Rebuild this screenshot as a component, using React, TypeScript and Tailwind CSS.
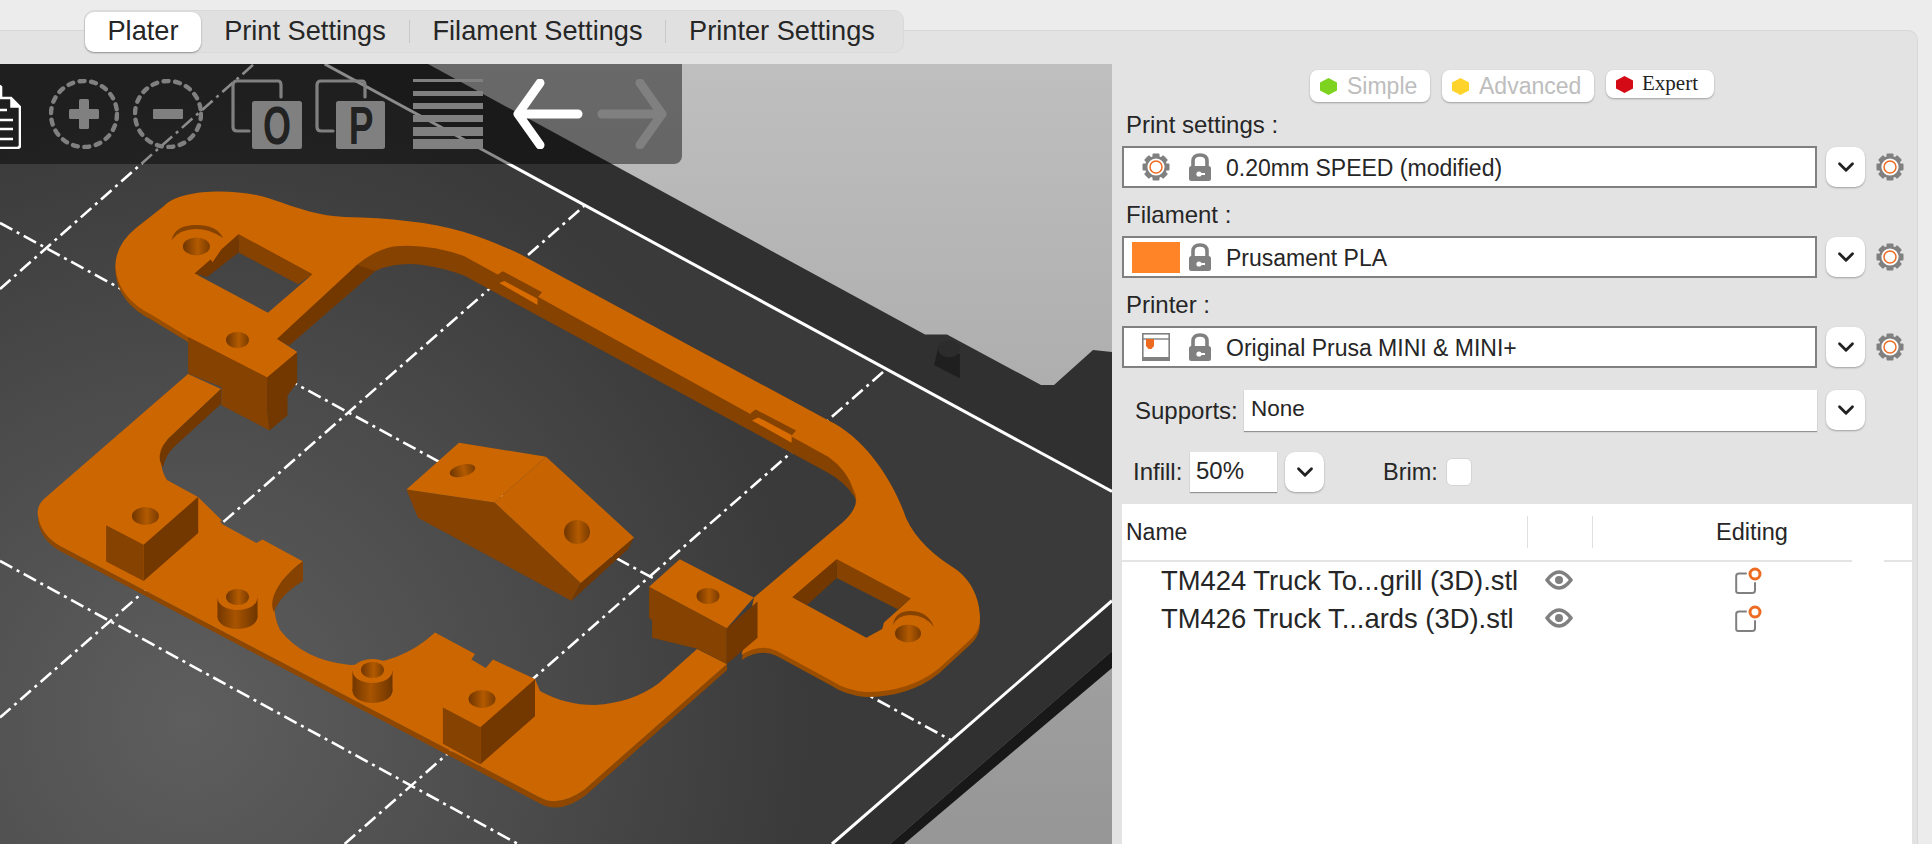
import React from 'react';
import { ChevronDown } from 'lucide-react';

// the crops used for tracing are stretched, so convert back to page pixels
const z4 = (pts: number[][]) => pts.map(([x, y]) => `${(x / 2.8).toFixed(1)},${(160 + y / 2.292).toFixed(1)}`).join(' ');
const z5 = (pts: number[][]) => pts.map(([x, y]) => `${(540 + x / 2.703).toFixed(1)},${(160 + y / 2.292).toFixed(1)}`).join(' ');

const TOP = '#cc6600';
const SIDE = '#854200';
const DARK = '#733700';

const upperFrame =
  'M188 337 L152 315 Q118 298 115.4 267 Q115 245 136 228 L164 206 C180 188 240 188 271 199 C300 209 320 216 345 217 C390 218 430 222 464 232 Q490 240 520 254 L828.6 420.5 C865 438 893 480 906 518 C916 540 935 556 954 568 C972 580 980 600 980 618 Q980 630 972 638 L939.5 668 Q910 692 865.6 692 Q845 690 832 681 L776.8 651 Q760 643 741.6 655 L754 597.6 L843 522 Q862 505 853.7 490 Q847 470 828.6 457 L464 256 Q428 243 393 246.4 Q375 250 357 264.7 L276.8 339 L297 352 L267 377 Z ' +
  'M194.6 273.4 L210.7 259.5 L212.5 262.5 L221.4 249.4 L238.6 234.2 L312.5 274.3 L267.9 312.7 Z ' +
  'M792.3 597.2 L836.7 559.2 L910.7 598.5 L884 622.5 L882.2 629 L866.3 637.7 Z';

const lowerFrame =
  'M188 374 L45 498 Q36 506 38 516 Q41 535 60 546 L539 797 Q558 808 584 790 L727 664 L697 649 L658.4 683.6 Q632 703 595 705 Q565 705 540 691 L535 679 L493 659.6 L485.7 668 L471.4 659.6 L475 654 L435 632.5 Q400 665 350 665 Q303 660 280 630 Q268 605 282 581 Q292 569 303 561.4 L262.5 539.6 L256.4 543 L222 524 L220 521 L222 520.5 L198 497 L167 480 Q155 462 168 439 L221 389 Z';

function Hole({ cx, cy, rx, ry, rotate = 0 }: { cx: number; cy: number; rx: number; ry: number; rotate?: number }) {
  return <ellipse cx={cx} cy={cy} rx={rx} ry={ry} fill="url(#hole)" transform={rotate ? `rotate(${rotate} ${cx} ${cy})` : undefined} />;
}

function Post({ cx, cy, h }: { cx: number; cy: number; h: number }) {
  return (
    <g>
      <ellipse cx={cx} cy={cy + h} rx={20} ry={12} fill="url(#post)" />
      <rect x={cx - 20} y={cy} width={40} height={h} fill="url(#post)" />
      <ellipse cx={cx} cy={cy} rx={20} ry={12} fill={TOP} />
      <Hole cx={cx} cy={cy - 1} rx={11.5} ry={8} />
    </g>
  );
}

function BedScene() {
  return (
    <svg viewBox="0 64 1112 780" className="block h-full w-full">
      <defs>
        <linearGradient id="sky" x1="0" y1="0" x2="0" y2="1">
          <stop offset="0" stopColor="#bfbfbf" />
          <stop offset="1" stopColor="#969696" />
        </linearGradient>
        <radialGradient id="bed" gradientUnits="userSpaceOnUse" cx="190" cy="720" r="620">
          <stop offset="0" stopColor="#5e5e5e" />
          <stop offset="0.55" stopColor="#4b4b4b" />
          <stop offset="1" stopColor="#3a3a3a" />
        </radialGradient>
        <linearGradient id="hole" x1="0" y1="0" x2="1" y2="0">
          <stop offset="0" stopColor="#6e3500" />
          <stop offset="0.55" stopColor="#b35a00" />
          <stop offset="1" stopColor="#7a3c00" />
        </linearGradient>
        <linearGradient id="post" x1="0" y1="0" x2="1" y2="0">
          <stop offset="0" stopColor="#733700" />
          <stop offset="0.45" stopColor="#a85400" />
          <stop offset="1" stopColor="#6e3500" />
        </linearGradient>
      </defs>

      <rect x="0" y="64" width="1112" height="780" fill="url(#sky)" />
      <polygon points="0,64 428,64 925,334.5 947,334.5 1041,385 1054,385 1093,350 1112,352 1112,651 890,844 0,844" fill="#303030" />
      <polygon points="1112,651 890,844 904,844 1112,668" fill="#181818" />
      <polygon points="0,64 324.6,64 1112,491.5 1112,600 832,844 0,844" fill="url(#bed)" />
      <line x1="324.6" y1="64" x2="1112" y2="491.5" stroke="#fff" strokeWidth="3" />
      <line x1="1112" y1="600.7" x2="832" y2="844" stroke="#fff" strokeWidth="3" />

      <g stroke="#fff" strokeWidth="2.6" strokeDasharray="14 5 3 5" fill="none">
        <line x1="0" y1="223" x2="950.7" y2="740" />
        <line x1="0" y1="561" x2="518" y2="844" />
        <line x1="0" y1="289" x2="254" y2="64" />
        <line x1="0" y1="717.6" x2="584" y2="206" />
        <line x1="344.6" y1="844" x2="886" y2="369.4" />
      </g>

      {/* little peg on the bed edge */}
      <polygon points={z5([[1065, 470], [1078, 425], [1135, 445], [1135, 500]])} fill="#1f1f1f" />
      <ellipse cx="949" cy="349" rx="11" ry="8.5" fill="#2c2c2c" />

      {/* lower frame */}
      <path
        d="M38 516 L38 522 Q42 541 60 551 L539 803 Q560 815 586 795 L727 670 L727 664 L584 790 Q558 808 539 797 L60 546 Q41 535 38 516 Z"
        fill="#8f4700"
      />
      <path d={lowerFrame} fill={TOP} />
      <path d="M221 389 L221 404 L175 446 Q165 455 163 468 L160 461 Q158 450 168 439 Z" fill={DARK} />
      <path d="M303 561 L303 581 Q280 595 274 612 Q268 600 282 581 Q292 569 303 561 Z" fill={SIDE} />

      <polygon points={z4([[297, 837], [402, 882], [402, 965], [297, 920]])} fill={SIDE} />
      <polygon points={z4([[402, 882], [555, 772], [555, 855], [402, 965]])} fill={DARK} />
      <polygon points={z4([[1240, 1255], [1345, 1300], [1345, 1385], [1240, 1338]])} fill={SIDE} />
      <polygon points={z4([[1345, 1300], [1498, 1190], [1498, 1275], [1345, 1385]])} fill={DARK} />
      <Hole cx={145.4} cy={516} rx={13.5} ry={9} />
      <Hole cx={482} cy={699} rx={13.5} ry={9} />
      <Post cx={237.5} cy={598} h={19} />
      <Post cx={372.5} cy={671} h={20} />

      {/* upper frame */}
      <path d={upperFrame} fillRule="evenodd" fill="#994d00" transform="translate(0 5)" />
      <path
        d="M853.7 496 Q850 470 828.6 457 L464 256 Q428 243 393 246.4 Q375 250 357 264.7 L276.8 339 L289 345.4 L375 271 Q395 262 421 264.7 Q445 268 464 275.6 L826.7 472 Q845 482 853.7 496 Z"
        fill={SIDE}
      />
      <polygon points="276.8,339 357,264.7 375,271 289,345.4" fill={DARK} />
      <path d={upperFrame} fillRule="evenodd" fill={TOP} />

      {/* ear cut-outs */}
      <polygon points={z4([[668, 170], [875, 262], [835, 285], [668, 212]])} fill={SIDE} />
      <polygon points={z4([[545, 260], [590, 228], [595, 235], [620, 205], [668, 170], [668, 212], [580, 268]])} fill={DARK} />
      <polygon points={z5([[802, 915], [1002, 1005], [968, 1030], [802, 958]])} fill={SIDE} />
      <polygon points={z5([[682, 1002], [802, 915], [802, 958], [722, 1020]])} fill={DARK} />
      <path d="M171.5 240 Q175 225 196 225 Q217 225 223 238 Q210 229 196 229 Q180 229 171.5 240 Z" fill={SIDE} />
      <path d="M893 625 Q895 611 910 611 Q928 611 934 627 Q925 615 910 615 Q898 615 893 625 Z" fill={SIDE} />
      <Hole cx={196.4} cy={246.4} rx={13.5} ry={9} />
      <Hole cx={908} cy={633.4} rx={13} ry={9} />

      {/* left block */}
      <polygon points={z4([[527, 405], [748, 498], [748, 575], [755, 620], [620, 562], [620, 520], [527, 490]])} fill={SIDE} />
      <polygon points={z4([[748, 498], [832, 440], [832, 510], [805, 540], [805, 585], [755, 620], [748, 575]])} fill={DARK} />
      <polygon points={z4([[527, 405], [775, 410], [832, 440], [748, 498]])} fill={TOP} />
      <Hole cx={237.5} cy={340} rx={11.5} ry={8} />

      {/* right block */}
      <polygon points={z5([[295, 978], [505, 1073], [505, 1155], [425, 1120], [303, 1095], [303, 1055], [295, 1050]])} fill={SIDE} />
      <polygon points={z5([[505, 1073], [588, 1012], [588, 1095], [505, 1155]])} fill={DARK} />
      <polygon points={z5([[295, 978], [378, 915], [578, 1003], [505, 1073]])} fill={TOP} />
      <Hole cx={708} cy={596} rx={11.5} ry={8} />

      {/* notches on the long arm */}
      <polygon points={z4([[1395, 262], [1408, 255], [1518, 303], [1505, 315], [1505, 335], [1395, 285]])} fill={SIDE} />
      <polygon points={z4([[1398, 282], [1412, 277], [1505, 318], [1505, 332]])} fill="#d96c00" />
      <polygon points={z5([[570, 580], [583, 572], [692, 620], [680, 632], [680, 652], [570, 600]])} fill={SIDE} />
      <polygon points={z5([[573, 597], [590, 590], [680, 630], [680, 648]])} fill="#d96c00" />

      {/* wedge */}
      <polygon points="406.4,489.4 494.6,502.5 580.7,583 571.4,600.7 417.9,517.8" fill={SIDE} />
      <polygon points="580.7,583 634,537.4 628,549 571.4,600.7" fill={DARK} />
      <polygon points="494.6,502.5 546,456.7 634,537.4 580.7,583" fill="#c76300" />
      <polygon points="406.4,489.4 459,442.7 546,456.7 494.6,502.5" fill={TOP} />
      <Hole cx={462.5} cy={470.6} rx={13} ry={6} rotate={-14} />
      <Hole cx={577} cy={532} rx={13} ry={12} />
    </svg>
  );
}

function CanvasToolbar() {
  const grey = '#808080';
  return (
    <div className="absolute left-0 top-0 flex h-[100px] w-[682px] items-start rounded-br-[8px] bg-black/45 pt-[15px]">
      <svg width="21" height="70" viewBox="0 0 21 70">
        <path d="M-6 19 H11 L20 28 V66 Q20 69 17 69 H-6" fill="none" stroke="#fff" strokeWidth="2.6" />
        <path d="M-6 19 V8 Q-2 5 1 8 V19" fill="none" stroke="#fff" strokeWidth="2.6" />
        <path d="M11 20 V28 H19" fill="#fff" stroke="#fff" strokeWidth="1.5" />
        <path d="M-2 31 H7 M-2 41 H13 M-2 50 H13 M-2 60 H13" stroke="#fff" strokeWidth="2.6" />
      </svg>
      <svg className="ml-[28px]" width="70" height="70" viewBox="0 0 70 70">
        <circle cx="35" cy="35" r="33" fill="none" stroke={grey} strokeWidth="4.4" strokeLinecap="round" strokeDasharray="5 6.6" />
        <rect x="20" y="30" width="30" height="10" rx="1.5" fill={grey} />
        <rect x="30" y="20" width="10" height="30" rx="1.5" fill={grey} />
      </svg>
      <svg className="ml-[14px]" width="70" height="70" viewBox="0 0 70 70">
        <circle cx="35" cy="35" r="33" fill="none" stroke={grey} strokeWidth="4.4" strokeLinecap="round" strokeDasharray="5 6.6" />
        <rect x="20" y="30" width="30" height="10" rx="1" fill={grey} />
      </svg>
      <svg className="ml-[28px] overflow-visible" width="71" height="70" viewBox="0 0 71 70">
        <path d="M18 52 H6 Q2 52 2 48 V6 Q2 2 6 2 H47 Q50 2 50 6 V18" fill="none" stroke={grey} strokeWidth="3.2" strokeLinecap="round" />
        <rect x="21" y="22" width="50" height="48" rx="2.5" fill={grey} />
        <text x="0" y="65" fontFamily="Liberation Sans" fontWeight="700" fontSize="53" fill="#222" textAnchor="middle" transform="translate(46 0) scale(0.68 1)">O</text>
      </svg>
      <svg className="ml-[13px] overflow-visible" width="70" height="70" viewBox="0 0 70 70">
        <path d="M18 52 H6 Q2 52 2 48 V6 Q2 2 6 2 H47 Q50 2 50 6 V18" fill="none" stroke={grey} strokeWidth="3.2" strokeLinecap="round" />
        <rect x="21" y="22" width="49" height="48" rx="2.5" fill={grey} />
        <text x="0" y="65" fontFamily="Liberation Sans" fontWeight="700" fontSize="53" fill="#222" textAnchor="middle" transform="translate(46 0) scale(0.7 1)">P</text>
      </svg>
      <svg className="ml-[28px]" width="70" height="70" viewBox="0 0 70 70" fill={grey}>
        <rect x="0" y="0" width="70" height="3" />
        <rect x="0" y="12" width="70" height="5" />
        <rect x="0" y="24" width="70" height="6" />
        <rect x="0" y="36" width="70" height="7" />
        <rect x="0" y="48" width="70" height="9" />
        <rect x="0" y="60" width="70" height="10" />
      </svg>
      <svg className="ml-[30px]" width="70" height="70" viewBox="0 0 70 70">
        <path d="M27 4 L5 35 L27 66 M5 35 H65" fill="none" stroke="#fff" strokeWidth="9" strokeLinecap="round" strokeLinejoin="round" />
      </svg>
      <svg className="ml-[14px]" width="70" height="70" viewBox="0 0 70 70">
        <path d="M43 4 L65 35 L43 66 M65 35 H5" fill="none" stroke={grey} strokeWidth="9" strokeLinecap="round" strokeLinejoin="round" />
      </svg>
    </div>
  );
}

function GearIcon({ className }: { className?: string }) {
  const teeth = [0, 45, 90, 135, 180, 225, 270, 315];
  return (
    <svg className={className} width="28" height="28" viewBox="0 0 28 28">
      {teeth.map((deg) => (
        <rect key={deg} x="10.5" y="0.5" width="7" height="6" rx="1" fill="#808080" transform={`rotate(${deg} 14 14)`} />
      ))}
      <circle cx="14" cy="14" r="11" fill="#808080" />
      <circle cx="14" cy="14" r="8.6" fill="#fff" />
      <circle cx="14" cy="14" r="6" fill="none" stroke="#ed6b21" strokeWidth="1.5" />
    </svg>
  );
}

function LockIcon() {
  return (
    <svg width="24" height="28" viewBox="0 0 24 28">
      <path d="M5 14 V8 Q5 2 12 2 Q19 2 19 8 V14" fill="none" stroke="#808080" strokeWidth="3.6" />
      <rect x="1" y="13" width="22" height="15" rx="2.5" fill="#808080" />
      <circle cx="11" cy="21" r="2.6" fill="#fff" />
      <rect x="11" y="20" width="6" height="2" fill="#fff" />
    </svg>
  );
}

function PrinterIcon() {
  return (
    <svg width="28" height="28" viewBox="0 0 28 28">
      <rect x="0.8" y="0.8" width="26.4" height="26.4" fill="none" stroke="#808080" strokeWidth="1.6" />
      <rect x="0" y="24" width="28" height="4" fill="#808080" />
      <line x1="0" y1="6" x2="28" y2="6" stroke="#808080" strokeWidth="1.4" />
      <path d="M4 6 H12 V13 L9.5 16 H6.5 L4 13 Z" fill="#ed6b21" />
    </svg>
  );
}

function EyeIcon() {
  return (
    <svg className="mb-[3px]" width="28" height="20" viewBox="0 0 28 20">
      <path d="M2 10 Q14 -6 26 10 Q14 26 2 10 Z" fill="none" stroke="#808080" strokeWidth="3.6" strokeLinejoin="round" />
      <circle cx="14" cy="10" r="4" fill="#808080" />
    </svg>
  );
}

function EditIcon() {
  return (
    <svg width="28" height="28" viewBox="0 0 28 28">
      <path d="M11 6.5 H4 Q1.2 6.5 1.2 9.2 V24 Q1.2 26 3.2 26 H17 Q20 26 20 23.5 V16" fill="none" stroke="#808080" strokeWidth="2" strokeLinecap="round" />
      <circle cx="20" cy="7" r="5" fill="#fff" stroke="#ed6b21" strokeWidth="3" />
    </svg>
  );
}

function Hex({ color, className }: { color: string; className?: string }) {
  return (
    <svg className={className} width="17" height="17" viewBox="0 0 17 17">
      <polygon points="8.5,0 17,4.5 17,12.5 8.5,17 0,12.5 0,4.5" fill={color} />
    </svg>
  );
}

function ArrowButton({ className }: { className?: string }) {
  return (
    <button className={`flex h-[40px] w-[39px] items-center justify-center rounded-[10px] bg-white shadow-[0_1px_2px_rgba(0,0,0,0.3)] ${className ?? ''}`}>
      <ChevronDown size={26} strokeWidth={2.6} color="#222" />
    </button>
  );
}

function PresetRow({ icon, name }: { icon: React.ReactNode; name: string }) {
  return (
    <div className="flex items-center">
      <div className="flex h-[42px] w-[695px] items-center border-2 border-[#808080] bg-white">
        <div className="flex w-[64px] shrink-0 justify-center">{icon}</div>
        <LockIcon />
        <span className="ml-[14px] pt-[2px] text-[23px] text-[#262626]">{name}</span>
      </div>
      <ArrowButton className="ml-[9px]" />
      <GearIcon className="ml-[11px]" />
    </div>
  );
}

const objects = ['TM424 Truck To...grill (3D).stl', 'TM426 Truck T...ards (3D).stl'];

export default function App() {
  return (
    <div className="relative h-[844px] w-[1932px] overflow-hidden bg-[#ececec] font-['Liberation_Sans',sans-serif] text-[#262626]">
      <div className="absolute left-[84px] top-[10px] z-10 flex h-[43px] w-[820px] items-center rounded-[10px] border border-[#dadada] bg-[#e0e0e0] text-[27.2px] text-[#262626]">
        <div className="flex h-[40px] w-[116px] items-center justify-center rounded-[9px] bg-white shadow-[0_1px_2px_rgba(0,0,0,0.35)]">Plater</div>
        <div className="flex w-[208px] justify-center">Print Settings</div>
        <div className="h-[23px] w-px bg-[#c8c8c8]" />
        <div className="flex w-[255px] justify-center">Filament Settings</div>
        <div className="h-[23px] w-px bg-[#c8c8c8]" />
        <div className="flex w-[232px] justify-center">Printer Settings</div>
      </div>

      <div className="mr-[14px] mt-[30px] flex h-[814px] rounded-tr-[10px] border-r border-t border-[#d8d8d8] bg-[#e3e3e3] pt-[33px]">
        <div className="relative h-[780px] w-[1112px] shrink-0">
          <BedScene />
          <CanvasToolbar />
        </div>

        <div className="flex min-w-0 flex-1 flex-col pl-[10px] pr-[5px]">
          <div className="mt-[6px] flex h-[32px] items-start pl-[188px] text-[23px]">
            <div className="flex h-[32px] w-[120px] items-center rounded-[8px] bg-white pl-[10px] text-[#bdbdbd] shadow-[0_1px_2px_rgba(0,0,0,0.3)]">
              <Hex color="#7ed321" />
              <span className="ml-[10px]">Simple</span>
            </div>
            <div className="ml-[12px] flex h-[32px] w-[152px] items-center rounded-[8px] bg-white pl-[10px] text-[#bdbdbd] shadow-[0_1px_2px_rgba(0,0,0,0.3)]">
              <Hex color="#ffd42a" />
              <span className="ml-[10px]">Advanced</span>
            </div>
            <div className="ml-[12px] flex h-[28px] w-[108px] items-center rounded-[8px] bg-white pl-[10px] font-['Liberation_Serif',serif] text-[21px] text-[#222] shadow-[0_1px_2px_rgba(0,0,0,0.3)]">
              <Hex color="#d40a16" />
              <span className="ml-[9px]">Expert</span>
            </div>
          </div>

          <div className="flex h-[44px] items-center pl-[4px] pt-[2px] text-[24px]">Print settings :</div>
          <PresetRow icon={<GearIcon />} name="0.20mm SPEED (modified)" />
          <div className="flex h-[48px] items-center pl-[4px] pt-[6px] text-[24px]">Filament :</div>
          <PresetRow icon={<div className="h-[31px] w-[48px] bg-[#ff8427]" />} name="Prusament PLA" />
          <div className="flex h-[48px] items-center pl-[4px] pt-[6px] text-[24px]">Printer :</div>
          <PresetRow icon={<PrinterIcon />} name="Original Prusa MINI & MINI+" />

          <div className="mt-[22px] flex h-[41px] items-start">
            <span className="ml-[13px] mt-[3px] w-[109px] text-[24px]">Supports:</span>
            <div className="h-[41px] w-[573px] bg-white pl-[7px] pt-[2px] text-[22.5px] shadow-[0_1px_1px_rgba(0,0,0,0.35)]">None</div>
            <ArrowButton className="ml-[9px]" />
          </div>

          <div className="mt-[21px] flex h-[40px] items-start">
            <span className="ml-[11px] mt-[2px] w-[57px] text-[24px]">Infill:</span>
            <div className="h-[40px] w-[87px] bg-white pl-[6px] pt-[1px] text-[24px] shadow-[0_1px_1px_rgba(0,0,0,0.35)]">50%</div>
            <ArrowButton className="ml-[8px]" />
            <span className="ml-[59px] mt-[3px] w-[63px] text-[23.5px]">Brim:</span>
            <div className="mt-[6px] h-[28px] w-[26px] rounded-[6px] border border-[#d4d4d4] bg-white" />
          </div>

          <div className="mt-[12px] min-h-0 flex-1 bg-white">
            <div className="relative flex h-[56px] items-start">
              <span className="ml-[4px] mt-[11px] w-[401px] text-[23px]">Name</span>
              <div className="mt-[12px] h-[32px] w-px bg-[#e0e0e0]" />
              <div className="ml-[64px] mt-[12px] h-[32px] w-px bg-[#e0e0e0]" />
              <span className="ml-[123px] mt-[11px] text-[23.5px]">Editing</span>
            </div>
            <div className="flex h-[2px]">
              <div className="h-full w-[730px] bg-[#e4e4e4]" />
              <div className="ml-[32px] h-full flex-1 bg-[#e4e4e4]" />
            </div>
            {objects.map((name) => (
              <div key={name} className="flex h-[38px] items-center first:mt-[1px]">
                <span className="ml-[39px] w-[384px] text-[27.4px]">{name}</span>
                <EyeIcon />
                <div className="ml-[162px]">
                  <EditIcon />
                </div>
              </div>
            ))}
          </div>
        </div>
      </div>
    </div>
  );
}
